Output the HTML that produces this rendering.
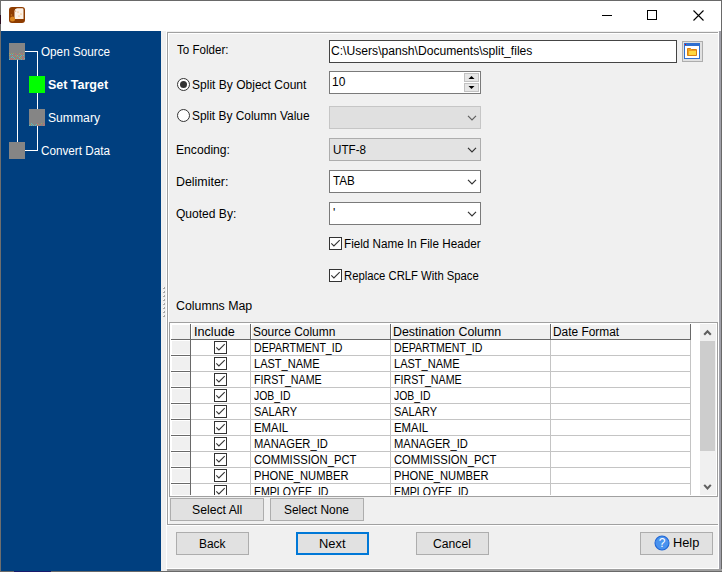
<!DOCTYPE html>
<html><head><meta charset="utf-8"><style>
html,body{margin:0;padding:0;width:722px;height:572px;overflow:hidden;background:#f0f0f0}
body div, body svg{position:absolute}
.t{font-family:'Liberation Sans', sans-serif;font-size:12px;line-height:14px;white-space:nowrap;color:#000;transform-origin:0 0}
</style></head><body>
<div style="left:0px;top:0px;width:722px;height:572px;background:#f0f0f0"></div>
<div style="left:0px;top:0px;width:722px;height:31px;background:#fff"></div>
<div style="left:1px;top:31px;width:160px;height:540px;background:#003f7f"></div>
<div style="left:0px;top:0px;width:722px;height:1px;background:#696969"></div>
<div style="left:0px;top:0px;width:1px;height:572px;background:#6e6e6e"></div>
<svg style="left:9px;top:7px" width="16" height="16" viewBox="0 0 16 16">
<rect x="0" y="0" width="16" height="16" rx="3" fill="#8e3c00"/>
<path d="M8 1.2 h5.3 a1.2 1.2 0 0 1 1.2 1.2 v9.6 h-9 v-7.6 a3.2 3.2 0 0 1 2.5 -3.2 z" fill="#fbf1e6"/>
<path d="M6 3 a2 2 0 0 0 -0.5 2 l2 -0.5 z" fill="#e0b080"/>
<circle cx="9" cy="5" r="0.6" fill="#f0a040"/><circle cx="12" cy="7" r="0.6" fill="#f0a040"/><circle cx="10" cy="9" r="0.6" fill="#f0a040"/>
<circle cx="3.5" cy="12" r="2.5" fill="#d9851e"/>
<circle cx="2.5" cy="8" r="0.8" fill="#c87818"/>
</svg>
<div style="left:602px;top:15px;width:10px;height:1px;background:#000"></div>
<div style="left:647px;top:10px;width:10px;height:10px;border:1px solid #000;box-sizing:border-box"></div>
<svg style="left:693px;top:10px" width="11" height="11" viewBox="0 0 11 11"><path d="M0.5 0.5 L10.5 10.5 M10.5 0.5 L0.5 10.5" stroke="#000" stroke-width="1.1"/></svg>
<div style="left:25px;top:51px;width:12px;height:1px;background:#fff"></div>
<div style="left:37px;top:51px;width:1px;height:100px;background:#fff"></div>
<div style="left:25px;top:150px;width:12px;height:1px;background:#fff"></div>
<div style="left:17px;top:60px;width:1px;height:82px;background:#fff"></div>
<svg style="left:9px;top:43px" width="16" height="17" viewBox="0 0 16 17" shape-rendering="crispEdges"><rect width="16" height="17" fill="#858585"/><rect x="0" y="10" width="1" height="1" fill="#a0a060"/><rect x="2" y="10" width="1" height="1" fill="#a0a060"/><rect x="4" y="10" width="1" height="1" fill="#a0a060"/><rect x="6" y="10" width="1" height="1" fill="#c07070"/><rect x="10" y="10" width="1" height="1" fill="#a0a060"/><rect x="12" y="10" width="1" height="1" fill="#c07070"/><rect x="14" y="10" width="1" height="1" fill="#a0a060"/><rect x="1" y="11" width="1" height="1" fill="#60b8b8"/><rect x="3" y="11" width="1" height="1" fill="#60b8b8"/><rect x="7" y="11" width="1" height="1" fill="#c07070"/><rect x="9" y="11" width="1" height="1" fill="#c07070"/><rect x="11" y="11" width="1" height="1" fill="#a0a060"/><rect x="13" y="11" width="1" height="1" fill="#c07070"/><rect x="0" y="12" width="1" height="1" fill="#a0a060"/><rect x="2" y="12" width="1" height="1" fill="#c07070"/><rect x="4" y="12" width="1" height="1" fill="#c07070"/><rect x="6" y="12" width="1" height="1" fill="#a0a060"/><rect x="8" y="12" width="1" height="1" fill="#60b8b8"/><rect x="12" y="12" width="1" height="1" fill="#60b8b8"/><rect x="14" y="12" width="1" height="1" fill="#60b8b8"/><rect x="3" y="13" width="1" height="1" fill="#60b8b8"/><rect x="5" y="13" width="1" height="1" fill="#c07070"/><rect x="7" y="13" width="1" height="1" fill="#a0a060"/><rect x="9" y="13" width="1" height="1" fill="#a0a060"/><rect x="11" y="13" width="1" height="1" fill="#60b8b8"/><rect x="13" y="13" width="1" height="1" fill="#c07070"/><rect x="2" y="14" width="1" height="1" fill="#60b8b8"/><rect x="4" y="14" width="1" height="1" fill="#60b8b8"/><rect x="10" y="14" width="1" height="1" fill="#60b8b8"/><rect x="12" y="14" width="1" height="1" fill="#a0a060"/><rect x="14" y="14" width="1" height="1" fill="#c07070"/><rect x="1" y="15" width="1" height="1" fill="#c07070"/><rect x="3" y="15" width="1" height="1" fill="#c07070"/><rect x="5" y="15" width="1" height="1" fill="#60b8b8"/><rect x="7" y="15" width="1" height="1" fill="#c07070"/><rect x="9" y="15" width="1" height="1" fill="#c07070"/><rect x="11" y="15" width="1" height="1" fill="#a0a060"/><rect x="13" y="15" width="1" height="1" fill="#c07070"/><rect x="15" y="15" width="1" height="1" fill="#60b8b8"/><rect x="0" y="16" width="1" height="1" fill="#60b8b8"/><rect x="2" y="16" width="1" height="1" fill="#c07070"/><rect x="4" y="16" width="1" height="1" fill="#c07070"/><rect x="6" y="16" width="1" height="1" fill="#a0a060"/><rect x="8" y="16" width="1" height="1" fill="#60b8b8"/><rect x="12" y="16" width="1" height="1" fill="#60b8b8"/><rect x="14" y="16" width="1" height="1" fill="#c07070"/></svg>
<div style="left:29px;top:76px;width:16px;height:17px;background:#00ff00"></div>
<svg style="left:29px;top:109px" width="16" height="17" viewBox="0 0 16 17" shape-rendering="crispEdges"><rect width="16" height="17" fill="#858585"/><rect x="2" y="14" width="1" height="1" fill="#60b8b8"/><rect x="8" y="14" width="1" height="1" fill="#c07070"/><rect x="12" y="14" width="1" height="1" fill="#a0a060"/><rect x="14" y="14" width="1" height="1" fill="#c07070"/><rect x="1" y="15" width="1" height="1" fill="#a0a060"/><rect x="3" y="15" width="1" height="1" fill="#60b8b8"/><rect x="7" y="15" width="1" height="1" fill="#60b8b8"/><rect x="9" y="15" width="1" height="1" fill="#a0a060"/><rect x="11" y="15" width="1" height="1" fill="#c07070"/><rect x="15" y="15" width="1" height="1" fill="#c07070"/><rect x="0" y="16" width="1" height="1" fill="#60b8b8"/><rect x="2" y="16" width="1" height="1" fill="#60b8b8"/><rect x="4" y="16" width="1" height="1" fill="#60b8b8"/><rect x="6" y="16" width="1" height="1" fill="#60b8b8"/><rect x="8" y="16" width="1" height="1" fill="#c07070"/><rect x="10" y="16" width="1" height="1" fill="#c07070"/><rect x="14" y="16" width="1" height="1" fill="#c07070"/></svg>
<svg style="left:9px;top:142px" width="16" height="17" viewBox="0 0 16 17" shape-rendering="crispEdges"><rect width="16" height="17" fill="#858585"/></svg>
<div class="t" style="left:41px;top:45px;transform:scaleX(0.976);color:#fff;">Open Source</div>
<div class="t" style="left:48px;top:78px;transform:scaleX(1.039);font-weight:bold;color:#fff;">Set Target</div>
<div class="t" style="left:48px;top:111px;transform:scaleX(1.013);color:#fff;">Summary</div>
<div class="t" style="left:41px;top:144px;transform:scaleX(0.976);color:#fff;">Convert Data</div>
<div style="left:167px;top:32px;width:553px;height:493px;border-top:1px solid #a0a0a0;border-left:1px solid #a0a0a0;border-bottom:1px solid #a0a0a0;box-sizing:border-box"></div>
<div style="left:168px;top:33px;width:550px;height:1px;background:#fff"></div>
<div style="left:719px;top:32px;width:1px;height:1px;background:#a0a0a8"></div>
<div style="left:166px;top:31px;width:1px;height:538px;background:#fff"></div>
<div style="left:0px;top:15px;width:1px;height:9px;background:#2a0c1e"></div>
<div style="left:163px;top:287px;width:2px;height:2px;background:#a8a8a8"></div>
<div style="left:163px;top:287px;width:1px;height:1px;background:#fff"></div>
<div style="left:163px;top:291px;width:2px;height:2px;background:#a8a8a8"></div>
<div style="left:163px;top:291px;width:1px;height:1px;background:#fff"></div>
<div style="left:163px;top:295px;width:2px;height:2px;background:#a8a8a8"></div>
<div style="left:163px;top:295px;width:1px;height:1px;background:#fff"></div>
<div style="left:163px;top:299px;width:2px;height:2px;background:#a8a8a8"></div>
<div style="left:163px;top:299px;width:1px;height:1px;background:#fff"></div>
<div style="left:163px;top:303px;width:2px;height:2px;background:#a8a8a8"></div>
<div style="left:163px;top:303px;width:1px;height:1px;background:#fff"></div>
<div style="left:163px;top:307px;width:2px;height:2px;background:#a8a8a8"></div>
<div style="left:163px;top:307px;width:1px;height:1px;background:#fff"></div>
<div style="left:163px;top:311px;width:2px;height:2px;background:#a8a8a8"></div>
<div style="left:163px;top:311px;width:1px;height:1px;background:#fff"></div>
<div style="left:163px;top:315px;width:2px;height:2px;background:#a8a8a8"></div>
<div style="left:163px;top:315px;width:1px;height:1px;background:#fff"></div>
<div style="left:168px;top:33px;width:1px;height:491px;background:#fff"></div>
<div style="left:167px;top:525px;width:552px;height:1px;background:#fff"></div>
<div class="t" style="left:177px;top:43px;transform:scaleX(0.965);">To Folder:</div>
<div class="t" style="left:192px;top:78px;transform:scaleX(1.003);">Split By Object Count</div>
<div class="t" style="left:192px;top:109px;transform:scaleX(0.992);">Split By Column Value</div>
<div class="t" style="left:176px;top:143px;transform:scaleX(1.011);">Encoding:</div>
<div class="t" style="left:176px;top:175px;transform:scaleX(1.034);">Delimiter:</div>
<div class="t" style="left:176px;top:207px;transform:scaleX(1.004);">Quoted By:</div>
<div class="t" style="left:344px;top:237px;transform:scaleX(0.975);">Field Name In File Header</div>
<div class="t" style="left:344px;top:269px;transform:scaleX(0.940);">Replace CRLF With Space</div>
<div class="t" style="left:176px;top:299px;transform:scaleX(1.029);">Columns Map</div>
<svg style="left:177px;top:78px" width="13" height="13" viewBox="0 0 13 13"><circle cx="6.5" cy="6.5" r="6" fill="#fff" stroke="#333" stroke-width="1"/><circle cx="6.5" cy="6.5" r="3.5" fill="#333"/></svg>
<svg style="left:177px;top:109px" width="13" height="13" viewBox="0 0 13 13"><circle cx="6.5" cy="6.5" r="6" fill="#fff" stroke="#333" stroke-width="1"/></svg>
<svg style="left:329px;top:237px" width="13" height="13" viewBox="0 0 13 13"><rect x="0.5" y="0.5" width="12" height="12" fill="#fff" stroke="#333" stroke-width="1"/><path d="M2.3 6.3 L4.9 8.9 L10.7 3.1" fill="none" stroke="#333" stroke-width="1.1"/></svg>
<svg style="left:329px;top:269px" width="13" height="13" viewBox="0 0 13 13"><rect x="0.5" y="0.5" width="12" height="12" fill="#fff" stroke="#333" stroke-width="1"/><path d="M2.3 6.3 L4.9 8.9 L10.7 3.1" fill="none" stroke="#333" stroke-width="1.1"/></svg>
<div style="left:329px;top:40px;width:348px;height:23px;background:#fff;border:1px solid #444;box-sizing:border-box"></div>
<div class="t" style="left:331px;top:44px;transform:scaleX(1.010);">C:\Users\pansh\Documents\split_files</div>
<div style="left:682px;top:41px;width:21px;height:21px;background:#e1e1e1;border:1px solid #adadad;box-sizing:border-box"></div>
<svg style="left:684px;top:43px" width="16" height="16" viewBox="0 0 16 16">
<rect x="0" y="0" width="16" height="16" fill="#2f6fd0"/>
<rect x="1" y="3" width="14" height="12" fill="#fff"/>
<rect x="1" y="1" width="1" height="1" fill="#e00"/>
<path d="M3.5 5.5 h3 l1 1 h5 v6 h-9 z" fill="#f0a020" stroke="#d88010" stroke-width="1"/>
<rect x="5" y="8" width="7" height="4" fill="#ffd840"/>
</svg>
<div style="left:329px;top:71px;width:152px;height:23px;background:#fff;border:1px solid #7a7a7a;box-sizing:border-box"></div>
<div class="t" style="left:332px;top:75px;">10</div>
<div style="left:464px;top:73px;width:15px;height:9px;background:#e6e6e6;border:1px solid #c2c2c2;box-sizing:border-box"></div>
<div style="left:464px;top:83px;width:15px;height:9px;background:#e6e6e6;border:1px solid #c2c2c2;box-sizing:border-box"></div>
<svg style="left:464px;top:73px" width="15" height="19" viewBox="0 0 15 19"><path d="M4.5 6 L7.5 3 L10.5 6 Z" fill="#000"/><path d="M4.5 13 L10.5 13 L7.5 16 Z" fill="#000"/></svg>
<div style="left:329px;top:106px;width:152px;height:23px;background:#e0e0e0;border:1px solid #c6c6c6;box-sizing:border-box"></div>
<svg style="left:467px;top:115px" width="10" height="6" viewBox="0 0 10 6"><path d="M1 0.8 L5 4.8 L9 0.8" fill="none" stroke="#606060" stroke-width="1.2"/></svg>
<div style="left:329px;top:138px;width:152px;height:23px;background:#e3e3e3;border:1px solid #adadad;box-sizing:border-box"></div>
<div class="t" style="left:333px;top:143px;transform:scaleX(0.970);">UTF-8</div>
<svg style="left:467px;top:147px" width="10" height="6" viewBox="0 0 10 6"><path d="M1 0.8 L5 4.8 L9 0.8" fill="none" stroke="#333" stroke-width="1.2"/></svg>
<div style="left:329px;top:170px;width:152px;height:23px;background:#fff;border:1px solid #7a7a7a;box-sizing:border-box"></div>
<div class="t" style="left:333px;top:174px;transform:scaleX(0.970);">TAB</div>
<svg style="left:467px;top:179px" width="10" height="6" viewBox="0 0 10 6"><path d="M1 0.8 L5 4.8 L9 0.8" fill="none" stroke="#333" stroke-width="1.2"/></svg>
<div style="left:329px;top:202px;width:152px;height:23px;background:#fff;border:1px solid #7a7a7a;box-sizing:border-box"></div>
<div class="t" style="left:333px;top:206px;">'</div>
<svg style="left:467px;top:211px" width="10" height="6" viewBox="0 0 10 6"><path d="M1 0.8 L5 4.8 L9 0.8" fill="none" stroke="#333" stroke-width="1.2"/></svg>
<div style="left:169px;top:322px;width:549px;height:175px;background:#fff;border:1px solid #a0a0a0;box-sizing:border-box"></div>
<div style="left:172px;top:325px;width:18px;height:14px;background:#f0f0f0"></div>
<div style="left:192px;top:325px;width:58px;height:14px;background:#f0f0f0"></div>
<div style="left:252px;top:325px;width:138px;height:14px;background:#f0f0f0"></div>
<div style="left:392px;top:325px;width:158px;height:14px;background:#f0f0f0"></div>
<div style="left:552px;top:325px;width:138px;height:14px;background:#f0f0f0"></div>
<div style="left:171px;top:339px;width:520px;height:1px;background:#696969"></div>
<div style="left:190px;top:324px;width:1px;height:16px;background:#696969"></div>
<div style="left:250px;top:324px;width:1px;height:16px;background:#696969"></div>
<div style="left:390px;top:324px;width:1px;height:16px;background:#696969"></div>
<div style="left:550px;top:324px;width:1px;height:16px;background:#696969"></div>
<div style="left:690px;top:324px;width:1px;height:16px;background:#696969"></div>
<div style="left:190px;top:340px;width:1px;height:155px;background:#696969"></div>
<div style="left:250px;top:340px;width:1px;height:155px;background:#c4c4c4"></div>
<div style="left:390px;top:340px;width:1px;height:155px;background:#c4c4c4"></div>
<div style="left:550px;top:340px;width:1px;height:155px;background:#c4c4c4"></div>
<div style="left:690px;top:340px;width:1px;height:155px;background:#c4c4c4"></div>
<div style="left:170px;top:340px;width:521px;height:155px;overflow:hidden">
<div style="left:2px;top:1px;width:18px;height:13px;background:#f0f0f0"></div>
<div style="left:1px;top:15px;width:20px;height:1px;background:#696969"></div>
<div style="left:21px;top:15px;width:500px;height:1px;background:#c4c4c4"></div>
<svg style="left:44px;top:1px" width="13" height="13" viewBox="0 0 13 13"><rect x="0.5" y="0.5" width="12" height="12" fill="#fff" stroke="#333" stroke-width="1"/><path d="M2.3 6.3 L4.9 8.9 L10.7 3.1" fill="none" stroke="#333" stroke-width="1.1"/></svg>
<div class="t" style="left:84px;top:1px;transform:scaleX(0.881)">DEPARTMENT_ID</div>
<div class="t" style="left:224px;top:1px;transform:scaleX(0.881)">DEPARTMENT_ID</div>
<div style="left:2px;top:17px;width:18px;height:13px;background:#f0f0f0"></div>
<div style="left:1px;top:31px;width:20px;height:1px;background:#696969"></div>
<div style="left:21px;top:31px;width:500px;height:1px;background:#c4c4c4"></div>
<svg style="left:44px;top:17px" width="13" height="13" viewBox="0 0 13 13"><rect x="0.5" y="0.5" width="12" height="12" fill="#fff" stroke="#333" stroke-width="1"/><path d="M2.3 6.3 L4.9 8.9 L10.7 3.1" fill="none" stroke="#333" stroke-width="1.1"/></svg>
<div class="t" style="left:84px;top:17px;transform:scaleX(0.920)">LAST_NAME</div>
<div class="t" style="left:224px;top:17px;transform:scaleX(0.920)">LAST_NAME</div>
<div style="left:2px;top:33px;width:18px;height:13px;background:#f0f0f0"></div>
<div style="left:1px;top:47px;width:20px;height:1px;background:#696969"></div>
<div style="left:21px;top:47px;width:500px;height:1px;background:#c4c4c4"></div>
<svg style="left:44px;top:33px" width="13" height="13" viewBox="0 0 13 13"><rect x="0.5" y="0.5" width="12" height="12" fill="#fff" stroke="#333" stroke-width="1"/><path d="M2.3 6.3 L4.9 8.9 L10.7 3.1" fill="none" stroke="#333" stroke-width="1.1"/></svg>
<div class="t" style="left:84px;top:33px;transform:scaleX(0.891)">FIRST_NAME</div>
<div class="t" style="left:224px;top:33px;transform:scaleX(0.891)">FIRST_NAME</div>
<div style="left:2px;top:49px;width:18px;height:13px;background:#f0f0f0"></div>
<div style="left:1px;top:63px;width:20px;height:1px;background:#696969"></div>
<div style="left:21px;top:63px;width:500px;height:1px;background:#c4c4c4"></div>
<svg style="left:44px;top:49px" width="13" height="13" viewBox="0 0 13 13"><rect x="0.5" y="0.5" width="12" height="12" fill="#fff" stroke="#333" stroke-width="1"/><path d="M2.3 6.3 L4.9 8.9 L10.7 3.1" fill="none" stroke="#333" stroke-width="1.1"/></svg>
<div class="t" style="left:84px;top:49px;transform:scaleX(0.867)">JOB_ID</div>
<div class="t" style="left:224px;top:49px;transform:scaleX(0.867)">JOB_ID</div>
<div style="left:2px;top:65px;width:18px;height:13px;background:#f0f0f0"></div>
<div style="left:1px;top:79px;width:20px;height:1px;background:#696969"></div>
<div style="left:21px;top:79px;width:500px;height:1px;background:#c4c4c4"></div>
<svg style="left:44px;top:65px" width="13" height="13" viewBox="0 0 13 13"><rect x="0.5" y="0.5" width="12" height="12" fill="#fff" stroke="#333" stroke-width="1"/><path d="M2.3 6.3 L4.9 8.9 L10.7 3.1" fill="none" stroke="#333" stroke-width="1.1"/></svg>
<div class="t" style="left:84px;top:65px;transform:scaleX(0.913)">SALARY</div>
<div class="t" style="left:224px;top:65px;transform:scaleX(0.913)">SALARY</div>
<div style="left:2px;top:81px;width:18px;height:13px;background:#f0f0f0"></div>
<div style="left:1px;top:95px;width:20px;height:1px;background:#696969"></div>
<div style="left:21px;top:95px;width:500px;height:1px;background:#c4c4c4"></div>
<svg style="left:44px;top:81px" width="13" height="13" viewBox="0 0 13 13"><rect x="0.5" y="0.5" width="12" height="12" fill="#fff" stroke="#333" stroke-width="1"/><path d="M2.3 6.3 L4.9 8.9 L10.7 3.1" fill="none" stroke="#333" stroke-width="1.1"/></svg>
<div class="t" style="left:84px;top:81px;transform:scaleX(0.948)">EMAIL</div>
<div class="t" style="left:224px;top:81px;transform:scaleX(0.948)">EMAIL</div>
<div style="left:2px;top:97px;width:18px;height:13px;background:#f0f0f0"></div>
<div style="left:1px;top:111px;width:20px;height:1px;background:#696969"></div>
<div style="left:21px;top:111px;width:500px;height:1px;background:#c4c4c4"></div>
<svg style="left:44px;top:97px" width="13" height="13" viewBox="0 0 13 13"><rect x="0.5" y="0.5" width="12" height="12" fill="#fff" stroke="#333" stroke-width="1"/><path d="M2.3 6.3 L4.9 8.9 L10.7 3.1" fill="none" stroke="#333" stroke-width="1.1"/></svg>
<div class="t" style="left:84px;top:97px;transform:scaleX(0.930)">MANAGER_ID</div>
<div class="t" style="left:224px;top:97px;transform:scaleX(0.930)">MANAGER_ID</div>
<div style="left:2px;top:113px;width:18px;height:13px;background:#f0f0f0"></div>
<div style="left:1px;top:127px;width:20px;height:1px;background:#696969"></div>
<div style="left:21px;top:127px;width:500px;height:1px;background:#c4c4c4"></div>
<svg style="left:44px;top:113px" width="13" height="13" viewBox="0 0 13 13"><rect x="0.5" y="0.5" width="12" height="12" fill="#fff" stroke="#333" stroke-width="1"/><path d="M2.3 6.3 L4.9 8.9 L10.7 3.1" fill="none" stroke="#333" stroke-width="1.1"/></svg>
<div class="t" style="left:84px;top:113px;transform:scaleX(0.937)">COMMISSION_PCT</div>
<div class="t" style="left:224px;top:113px;transform:scaleX(0.937)">COMMISSION_PCT</div>
<div style="left:2px;top:129px;width:18px;height:13px;background:#f0f0f0"></div>
<div style="left:1px;top:143px;width:20px;height:1px;background:#696969"></div>
<div style="left:21px;top:143px;width:500px;height:1px;background:#c4c4c4"></div>
<svg style="left:44px;top:129px" width="13" height="13" viewBox="0 0 13 13"><rect x="0.5" y="0.5" width="12" height="12" fill="#fff" stroke="#333" stroke-width="1"/><path d="M2.3 6.3 L4.9 8.9 L10.7 3.1" fill="none" stroke="#333" stroke-width="1.1"/></svg>
<div class="t" style="left:84px;top:129px;transform:scaleX(0.932)">PHONE_NUMBER</div>
<div class="t" style="left:224px;top:129px;transform:scaleX(0.932)">PHONE_NUMBER</div>
<div style="left:2px;top:145px;width:18px;height:13px;background:#f0f0f0"></div>
<div style="left:1px;top:159px;width:20px;height:1px;background:#696969"></div>
<div style="left:21px;top:159px;width:500px;height:1px;background:#c4c4c4"></div>
<svg style="left:44px;top:145px" width="13" height="13" viewBox="0 0 13 13"><rect x="0.5" y="0.5" width="12" height="12" fill="#fff" stroke="#333" stroke-width="1"/><path d="M2.3 6.3 L4.9 8.9 L10.7 3.1" fill="none" stroke="#333" stroke-width="1.1"/></svg>
<div class="t" style="left:84px;top:145px;transform:scaleX(0.879)">EMPLOYEE_ID</div>
<div class="t" style="left:224px;top:145px;transform:scaleX(0.879)">EMPLOYEE_ID</div>
</div>
<div class="t" style="left:194px;top:325px;transform:scaleX(1.054);">Include</div>
<div class="t" style="left:253px;top:325px;transform:scaleX(0.996);">Source Column</div>
<div class="t" style="left:393px;top:325px;transform:scaleX(1.033);">Destination Column</div>
<div class="t" style="left:553px;top:325px;transform:scaleX(0.992);">Date Format</div>
<div style="left:700px;top:324px;width:16px;height:171px;background:#f0f0f0"></div>
<div style="left:700px;top:341px;width:15px;height:110px;background:#cdcdcd"></div>
<svg style="left:703px;top:329px" width="9" height="8" viewBox="0 0 9 8"><path d="M1.2 5.8 L4.5 2.3 L7.8 5.8" fill="none" stroke="#606060" stroke-width="2.1"/></svg>
<svg style="left:703px;top:483px" width="9" height="8" viewBox="0 0 9 8"><path d="M1.2 1.9 L4.5 5.4 L7.8 1.9" fill="none" stroke="#606060" stroke-width="2.1"/></svg>
<div style="left:170px;top:498px;width:94px;height:23px;background:#e1e1e1;border:1px solid #adadad;box-sizing:border-box"></div>
<div class="t" style="left:192px;top:503px;transform:scaleX(1.019);">Select All</div>
<div style="left:270px;top:498px;width:94px;height:23px;background:#e1e1e1;border:1px solid #adadad;box-sizing:border-box"></div>
<div class="t" style="left:284px;top:503px;transform:scaleX(0.994);">Select None</div>
<div style="left:176px;top:532px;width:73px;height:23px;background:#e1e1e1;border:1px solid #adadad;box-sizing:border-box"></div>
<div class="t" style="left:199px;top:537px;transform:scaleX(0.993);">Back</div>
<div style="left:296px;top:532px;width:73px;height:23px;background:#e1e1e1;border:2px solid #0078d7;box-sizing:border-box"></div>
<div class="t" style="left:319px;top:537px;transform:scaleX(1.074);">Next</div>
<div style="left:416px;top:532px;width:73px;height:23px;background:#e1e1e1;border:1px solid #adadad;box-sizing:border-box"></div>
<div class="t" style="left:433px;top:537px;transform:scaleX(1.016);">Cancel</div>
<div style="left:640px;top:532px;width:73px;height:23px;background:#e1e1e1;border:1px solid #adadad;box-sizing:border-box"></div>
<svg style="left:654px;top:535px" width="16" height="16" viewBox="0 0 16 16"><circle cx="8" cy="8" r="7" fill="#4a93ee" stroke="#1f66d6" stroke-width="1.1"/><text x="8" y="12.3" text-anchor="middle" font-family="Liberation Sans" font-size="12" fill="#fff">?</text></svg>
<div class="t" style="left:673px;top:536px;transform:scaleX(1.065);">Help</div>
<div style="left:718px;top:32px;width:1px;height:537px;background:#fff"></div>
<div style="left:719px;top:31px;width:2px;height:541px;background:#a0a0a8"></div>
<div style="left:721px;top:0px;width:1px;height:572px;background:#696969"></div>
<div style="left:167px;top:568px;width:551px;height:1px;background:#fff"></div>
<div style="left:167px;top:569px;width:555px;height:2px;background:#a0a0a0"></div>
<div style="left:0px;top:571px;width:722px;height:1px;background:#696969"></div>
<div style="left:14px;top:571px;width:37px;height:1px;background:#1a1a6a"></div>
</body></html>
